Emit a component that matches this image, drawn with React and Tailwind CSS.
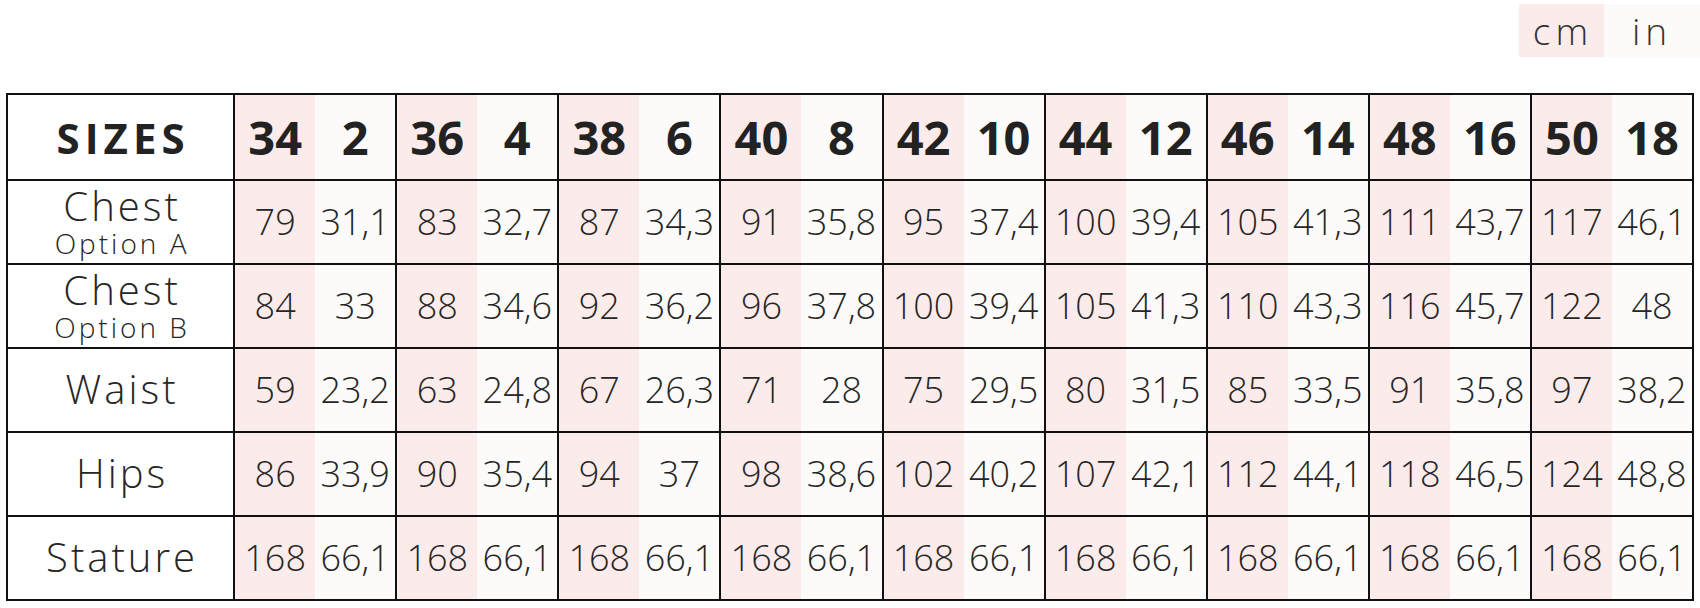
const groups = [
  { cm: '34', inch: '2' },
  { cm: '36', inch: '4' },
  { cm: '38', inch: '6' },
  { cm: '40', inch: '8' },
  { cm: '42', inch: '10' },
  { cm: '44', inch: '12' },
  { cm: '46', inch: '14' },
  { cm: '48', inch: '16' },
  { cm: '50', inch: '18' },
];

const rows = [
  { label: 'Chest', sub: 'Option A', values: [['79', '31,1'], ['83', '32,7'], ['87', '34,3'], ['91', '35,8'], ['95', '37,4'], ['100', '39,4'], ['105', '41,3'], ['111', '43,7'], ['117', '46,1']] },
  { label: 'Chest', sub: 'Option B', values: [['84', '33'], ['88', '34,6'], ['92', '36,2'], ['96', '37,8'], ['100', '39,4'], ['105', '41,3'], ['110', '43,3'], ['116', '45,7'], ['122', '48']] },
  { label: 'Waist', values: [['59', '23,2'], ['63', '24,8'], ['67', '26,3'], ['71', '28'], ['75', '29,5'], ['80', '31,5'], ['85', '33,5'], ['91', '35,8'], ['97', '38,2']] },
  { label: 'Hips', values: [['86', '33,9'], ['90', '35,4'], ['94', '37'], ['98', '38,6'], ['102', '40,2'], ['107', '42,1'], ['112', '44,1'], ['118', '46,5'], ['124', '48,8']] },
  { label: 'Stature', values: [['168', '66,1'], ['168', '66,1'], ['168', '66,1'], ['168', '66,1'], ['168', '66,1'], ['168', '66,1'], ['168', '66,1'], ['168', '66,1'], ['168', '66,1']] },
];

export default function App() {
  return (
    <div className="w-[1700px] h-[608px] bg-white text-[#262626] font-['Open_Sans',sans-serif]">
      {/* unit switch */}
      <div className="flex justify-end pt-[4px]">
        <button className="w-[85px] h-[53px] bg-[#fbeceb] text-[37px] font-light tracking-[5px] pl-[3px] leading-none text-[#333]">cm</button>
        <button className="w-[96px] h-[53px] bg-[#fcfbfa] text-[37px] font-light tracking-[5px] leading-none text-[#333]">in</button>
      </div>

      <table className="mt-[36px] ml-[6px] w-[1688px] table-fixed border-collapse border-2 border-[#111]">
        <colgroup>
          <col className="w-[227px]" />
          {groups.map((g) => (
            <>
              <col key={g.cm + 'a'} className="w-[81px]" />
              <col key={g.cm + 'b'} className="w-[81px]" />
            </>
          ))}
        </colgroup>
        <thead>
          <tr className="h-[86px]">
            <th className="border-2 border-[#111] bg-white text-[42px] font-bold tracking-[5px] pl-[5px] text-[#222]">SIZES</th>
            {groups.map((g) => (
              <>
                <th key={g.cm} className="border-y-2 border-l-2 border-[#111] bg-[#fbeceb] text-[47px] font-bold text-[#222]">{g.cm}</th>
                <th key={g.inch} className="border-y-2 border-r-2 border-[#111] bg-[#fcfbfa] text-[47px] font-bold text-[#222]">{g.inch}</th>
              </>
            ))}
          </tr>
        </thead>
        <tbody>
          {rows.map((r, i) => (
            <tr key={i} className="h-[84px]">
              <td className="border-2 border-[#111] bg-white text-center font-light">
                <div className={r.sub ? 'text-[40px] leading-[40px] tracking-[3px] pl-[3px]' : 'text-[40px] leading-[40px] tracking-[3px] pl-[3px] pb-[3px]'}>{r.label}</div>
                {r.sub && <div className="mt-[2px] text-[28px] leading-[30px] tracking-[3px] pl-[3px]">{r.sub}</div>}
              </td>
              {r.values.map(([a, b], j) => (
                <>
                  <td key={j + 'a'} className="border-y-2 border-l-2 border-[#111] bg-[#fbeceb] text-center text-[36px] font-light">{a}</td>
                  <td key={j + 'b'} className="border-y-2 border-r-2 border-[#111] bg-[#fcfbfa] text-center text-[36px] font-light">{b}</td>
                </>
              ))}
            </tr>
          ))}
        </tbody>
      </table>
    </div>
  );
}
